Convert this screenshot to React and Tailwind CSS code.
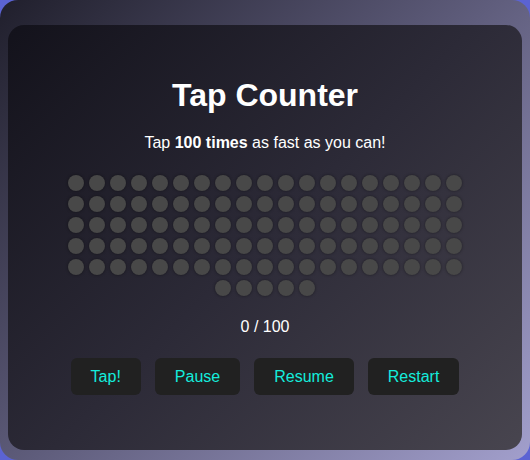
export default function App() {
  const dots = Array.from({ length: 100 });
  const buttons = ["Tap!", "Pause", "Resume", "Restart"];
  return (
    <div
      className="w-[530px] h-[460px] bg-[#5b63d3] overflow-hidden"
      style={{ fontFamily: '"Liberation Sans", Arial, sans-serif' }}
    >
      <div className="w-full h-full rounded-[18px] bg-[linear-gradient(135deg,#201f2c_0%,#5f5d7c_50%,#a29fcc_100%)] pt-[25px] px-2 pb-[10px]">
        <div className="w-full h-full rounded-[16px] bg-[linear-gradient(135deg,#13121b_0%,#2c2a37_50%,#48454f_100%)] flex flex-col items-center pt-[52px] text-white">
          <h1 className="text-[32px] leading-[37px] font-bold">Tap Counter</h1>
          <p className="mt-[20px] text-[16px] leading-[18px]">
            Tap <b className="font-bold">100 times</b> as fast as you can!
          </p>
          <div className="mt-[23px] w-[400px] flex flex-wrap justify-center gap-[5px]">
            {dots.map((_, i) => (
              <div
                key={i}
                className="w-4 h-4 rounded-full bg-[#484848] shadow-[0_0_3px_rgba(0,0,0,0.45)]"
              />
            ))}
          </div>
          <div className="mt-[22px] text-[16px] leading-[18px]">0 / 100</div>
          <div className="mt-[22px] flex gap-[14px]">
            {buttons.map((b) => (
              <button
                key={b}
                className="h-[37px] px-5 rounded-[6px] bg-[#212121] text-[#14ecdc] text-[16px] leading-[18px]"
              >
                {b}
              </button>
            ))}
          </div>
        </div>
      </div>
    </div>
  );
}
